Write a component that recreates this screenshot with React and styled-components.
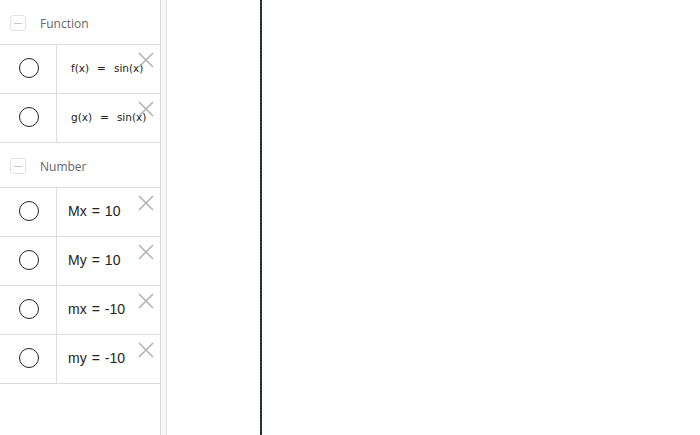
import React from "react";
import styled, { createGlobalStyle } from "styled-components";

const Global = createGlobalStyle`
  html, body { margin: 0; padding: 0; background: #fff; }
  body { font-family: "Liberation Sans", Arial, sans-serif; }
  #root { width: 700px; height: 435px; overflow: hidden; }
`;

const Page = styled.div`
  display: flex;
  width: 700px;
  height: 435px;
  background: #fff;
`;

const AlgebraPanel = styled.div`
  width: 160px;
  flex: none;
  display: flex;
  flex-direction: column;
  background: #fff;
`;

const GroupHeader = styled.div`
  display: flex;
  align-items: center;
  height: ${(p) => p.$h}px;
  padding: 2px 0 0 10px;
  box-sizing: border-box;
  border-bottom: 1px solid #dcdcdc;
  gap: 14px;
`;

const Collapse = styled.div`
  width: 14px;
  height: 14px;
  border: 1px solid #e2e2e2;
  border-radius: 3px;
  display: flex;
  align-items: center;
  justify-content: center;
  &::after {
    content: "";
    width: 8px;
    height: 1px;
    background: #c8c8c8;
  }
`;

const GroupTitle = styled.span`
  font-family: "Open Sans", Roboto, sans-serif;
  font-size: 12px;
  color: #666;
`;

const Row = styled.div`
  position: relative;
  display: flex;
  height: 49px;
  box-sizing: border-box;
  border-bottom: 1px solid #dcdcdc;
`;

const Marble = styled.div`
  width: 56px;
  flex: none;
  border-right: 1px solid #dcdcdc;
  display: flex;
  align-items: center;
  justify-content: center;
  &::after {
    content: "";
    width: 18px;
    height: 18px;
    border: 1.3px solid #222;
    border-radius: 50%;
    margin: 0 0 2px 1px;
  }
`;

const Formula = styled.div`
  display: flex;
  align-items: center;
  padding-left: ${(p) => (p.$small ? 14 : 11)}px;
  padding-bottom: 3px;
  font-family: ${(p) => (p.$small ? '"DejaVu Sans", Verdana' : '"Liberation Sans", Arial')}, sans-serif;
  font-size: ${(p) => (p.$small ? 10.5 : 14)}px;
  color: #222;
  white-space: nowrap;
`;

const Eq = styled.span`
  margin: 0 ${(p) => (p.$small ? 8 : 5)}px;
`;

const Close = styled.svg`
  position: absolute;
  top: 7px;
  left: 138px;
  width: 16px;
  height: 16px;
`;

const Dragger = styled.div`
  width: 7px;
  flex: none;
  box-sizing: border-box;
  background: #f7f7f7;
  border-left: 1px solid #dcdcdc;
  border-right: 1px solid #e4e4e4;
`;

const Graphics = styled.div`
  flex: 1;
  display: flex;
  padding-left: 93px;
  background: #fff;
`;

const Axis = styled.div`
  width: 2px;
  height: 100%;
  background: repeating-linear-gradient(
    to bottom,
    #1b2b1f 0px,
    #1b2b1f 2px,
    #3b4a3e 2px,
    #3b4a3e 3px
  );
`;

const XIcon = () => (
  <Close viewBox="0 0 16 16">
    <path d="M1 1 L15 15 M15 1 L1 15" stroke="#b4b4b4" strokeWidth="1.6" fill="none" />
  </Close>
);

const Item = ({ lhs, rhs, small }) => (
  <Row>
    <Marble />
    <Formula $small={small}>
      {lhs}
      <Eq $small={small}>=</Eq>
      {rhs}
    </Formula>
    <XIcon />
  </Row>
);

export default function App() {
  return (
    <Page>
      <Global />
      <AlgebraPanel>
        <GroupHeader $h={45}>
          <Collapse />
          <GroupTitle>Function</GroupTitle>
        </GroupHeader>
        <Item lhs="f(x)" rhs="sin(x)" small />
        <Item lhs="g(x)" rhs="sin(x)" small />
        <GroupHeader $h={45}>
          <Collapse />
          <GroupTitle>Number</GroupTitle>
        </GroupHeader>
        <Item lhs="Mx" rhs="10" />
        <Item lhs="My" rhs="10" />
        <Item lhs="mx" rhs="-10" />
        <Item lhs="my" rhs="-10" />
      </AlgebraPanel>
      <Dragger />
      <Graphics>
        <Axis />
      </Graphics>
    </Page>
  );
}
